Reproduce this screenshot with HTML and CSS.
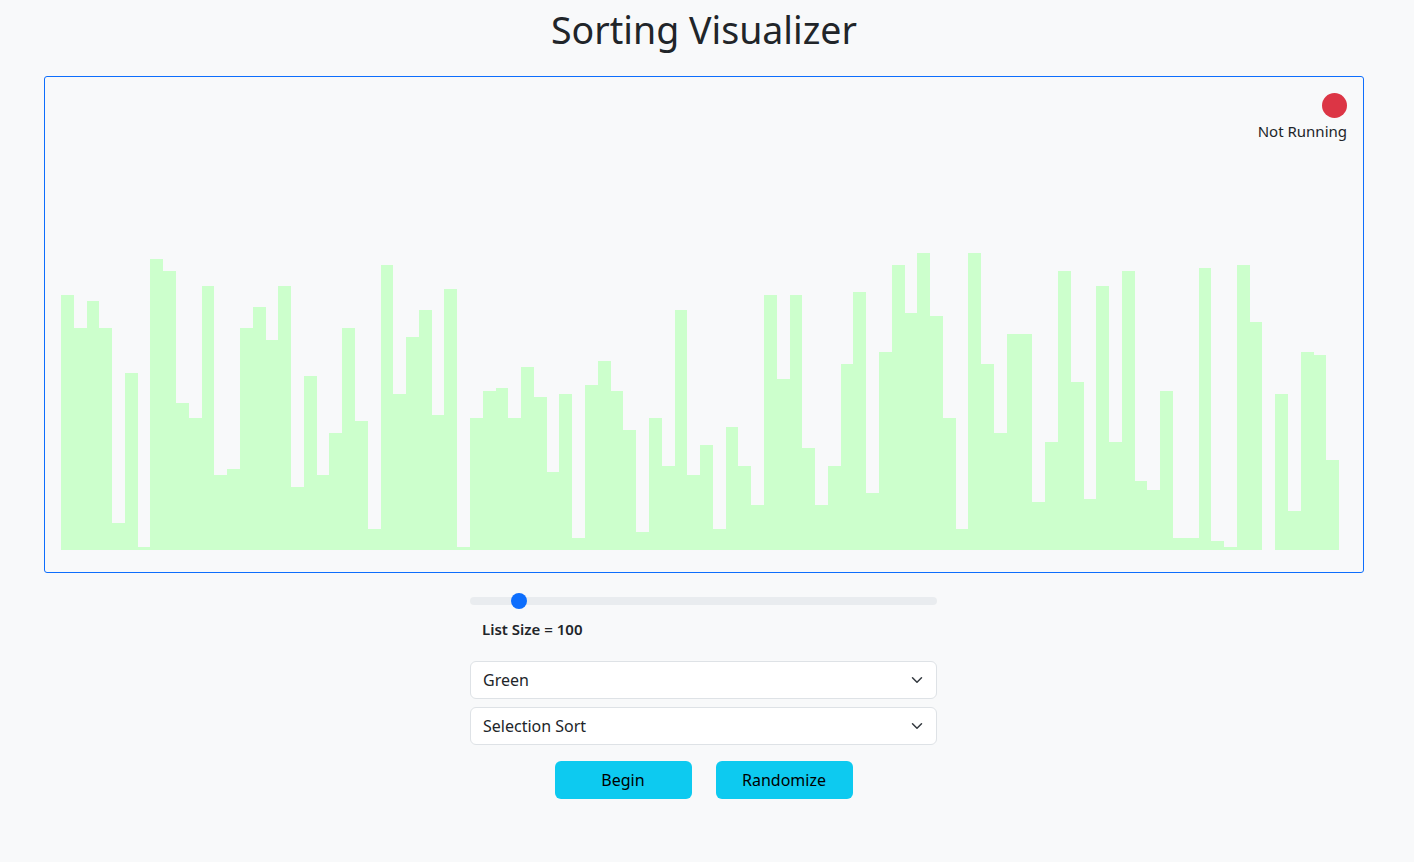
FILE: index.html
```html
<!DOCTYPE html>
<html lang="en">
<head>
<meta charset="utf-8">
<title>Sorting Visualizer</title>
<link rel="stylesheet" href="styles.css">
</head>
<body>
<div class="page">
  <h1 class="title">Sorting Visualizer</h1>
  <div class="board">
    <div class="status">
      <span class="status-dot"></span>
      <span class="status-text">Not Running</span>
    </div>
    <div class="bars-area">
      <div class="bars">
        <div class="bar" style="height:255px"></div>
        <div class="bar" style="height:222px"></div>
        <div class="bar" style="height:249px"></div>
        <div class="bar" style="height:222px"></div>
        <div class="bar" style="height:27px"></div>
        <div class="bar" style="height:177px"></div>
        <div class="bar" style="height:3px"></div>
        <div class="bar" style="height:291px"></div>
        <div class="bar" style="height:279px"></div>
        <div class="bar" style="height:147px"></div>
        <div class="bar" style="height:132px"></div>
        <div class="bar" style="height:264px"></div>
        <div class="bar" style="height:75px"></div>
        <div class="bar" style="height:81px"></div>
        <div class="bar" style="height:222px"></div>
        <div class="bar" style="height:243px"></div>
        <div class="bar" style="height:210px"></div>
        <div class="bar" style="height:264px"></div>
        <div class="bar" style="height:63px"></div>
        <div class="bar" style="height:174px"></div>
        <div class="bar" style="height:75px"></div>
        <div class="bar" style="height:117px"></div>
        <div class="bar" style="height:222px"></div>
        <div class="bar" style="height:129px"></div>
        <div class="bar" style="height:21px"></div>
        <div class="bar" style="height:285px"></div>
        <div class="bar" style="height:156px"></div>
        <div class="bar" style="height:213px"></div>
        <div class="bar" style="height:240px"></div>
        <div class="bar" style="height:135px"></div>
        <div class="bar" style="height:261px"></div>
        <div class="bar" style="height:3px"></div>
        <div class="bar" style="height:132px"></div>
        <div class="bar" style="height:159px"></div>
        <div class="bar" style="height:162px"></div>
        <div class="bar" style="height:132px"></div>
        <div class="bar" style="height:183px"></div>
        <div class="bar" style="height:153px"></div>
        <div class="bar" style="height:78px"></div>
        <div class="bar" style="height:156px"></div>
        <div class="bar" style="height:12px"></div>
        <div class="bar" style="height:165px"></div>
        <div class="bar" style="height:189px"></div>
        <div class="bar" style="height:159px"></div>
        <div class="bar" style="height:120px"></div>
        <div class="bar" style="height:18px"></div>
        <div class="bar" style="height:132px"></div>
        <div class="bar" style="height:84px"></div>
        <div class="bar" style="height:240px"></div>
        <div class="bar" style="height:75px"></div>
        <div class="bar" style="height:105px"></div>
        <div class="bar" style="height:21px"></div>
        <div class="bar" style="height:123px"></div>
        <div class="bar" style="height:84px"></div>
        <div class="bar" style="height:45px"></div>
        <div class="bar" style="height:255px"></div>
        <div class="bar" style="height:171px"></div>
        <div class="bar" style="height:255px"></div>
        <div class="bar" style="height:102px"></div>
        <div class="bar" style="height:45px"></div>
        <div class="bar" style="height:84px"></div>
        <div class="bar" style="height:186px"></div>
        <div class="bar" style="height:258px"></div>
        <div class="bar" style="height:57px"></div>
        <div class="bar" style="height:198px"></div>
        <div class="bar" style="height:285px"></div>
        <div class="bar" style="height:237px"></div>
        <div class="bar" style="height:297px"></div>
        <div class="bar" style="height:234px"></div>
        <div class="bar" style="height:132px"></div>
        <div class="bar" style="height:21px"></div>
        <div class="bar" style="height:297px"></div>
        <div class="bar" style="height:186px"></div>
        <div class="bar" style="height:117px"></div>
        <div class="bar" style="height:216px"></div>
        <div class="bar" style="height:216px"></div>
        <div class="bar" style="height:48px"></div>
        <div class="bar" style="height:108px"></div>
        <div class="bar" style="height:279px"></div>
        <div class="bar" style="height:168px"></div>
        <div class="bar" style="height:51px"></div>
        <div class="bar" style="height:264px"></div>
        <div class="bar" style="height:108px"></div>
        <div class="bar" style="height:279px"></div>
        <div class="bar" style="height:69px"></div>
        <div class="bar" style="height:60px"></div>
        <div class="bar" style="height:159px"></div>
        <div class="bar" style="height:12px"></div>
        <div class="bar" style="height:12px"></div>
        <div class="bar" style="height:282px"></div>
        <div class="bar" style="height:9px"></div>
        <div class="bar" style="height:3px"></div>
        <div class="bar" style="height:285px"></div>
        <div class="bar" style="height:228px"></div>
        <div class="bar" style="height:0px"></div>
        <div class="bar" style="height:156px"></div>
        <div class="bar" style="height:39px"></div>
        <div class="bar" style="height:198px"></div>
        <div class="bar" style="height:195px"></div>
        <div class="bar" style="height:90px"></div>
      </div>
    </div>
  </div>

  <div class="controls">
    <input class="range" type="range" min="10" max="1000" value="100">
    <div class="size-label">List Size = 100</div>

    <div class="select-wrap">
      <select class="select">
        <option>Green</option>
      </select>
      <svg class="chevron" viewBox="0 0 16 16" width="16" height="16"><path d="M2 5l6 6 6-6" fill="none" stroke="#343a40" stroke-width="2" stroke-linecap="round" stroke-linejoin="round"/></svg>
    </div>
    <div class="select-wrap">
      <select class="select">
        <option>Selection Sort</option>
      </select>
      <svg class="chevron" viewBox="0 0 16 16" width="16" height="16"><path d="M2 5l6 6 6-6" fill="none" stroke="#343a40" stroke-width="2" stroke-linecap="round" stroke-linejoin="round"/></svg>
    </div>

    <div class="buttons">
      <button class="btn" type="button">Begin</button>
      <button class="btn" type="button">Randomize</button>
    </div>
  </div>
</div>
</body>
</html>
```

FILE: styles.css
```css
* {
  box-sizing: border-box;
}

html, body {
  margin: 0;
  background: #f8f9fa;
}

body {
  padding: 0 6px 0 0;
  font-family: "Segoe UI", "Noto Sans", "Liberation Sans", sans-serif;
  font-size: 16px;
  color: #212529;
}

.page {
  width: 1320px;
  margin: 0 auto;
}

.title {
  margin: 0;
  padding-top: 4px;
  height: 76px;
  text-align: center;
  font-weight: 400;
  font-size: 37.5px;
  line-height: 52px;
  color: #212529;
}

.board {
  height: 497px;
  border: 1px solid #0d6efd;
  border-radius: 3px;
  display: flex;
  flex-direction: column;
  padding: 16px 16px 22px 16px;
}

.status {
  display: flex;
  flex-direction: column;
  align-items: flex-end;
}

.status-dot {
  width: 25px;
  height: 25px;
  border-radius: 50%;
  background: #dc3545;
}

.status-text {
  font-size: 15px;
  line-height: 26px;
  margin-right: 0;
}

.bars-area {
  flex: 1;
  display: flex;
  align-items: flex-end;
}

.bars {
  width: 1278px;
  height: 300px;
  display: flex;
  align-items: flex-end;
}

.bar {
  flex: 1 1 0;
  background: #ccffcc;
}

.controls {
  width: 467px;
  margin: 0 0 0 426px;
  padding-top: 20px;
  display: flex;
  flex-direction: column;
}

.range {
  -webkit-appearance: none;
  appearance: none;
  width: 100%;
  height: 16px;
  margin: 0;
  background: transparent;
}

.range::-webkit-slider-runnable-track {
  height: 8px;
  border-radius: 4px;
  background: #e9ecef;
}

.range::-webkit-slider-thumb {
  -webkit-appearance: none;
  appearance: none;
  width: 16px;
  height: 16px;
  margin-top: -4px;
  border-radius: 50%;
  background: #0d6efd;
  border: 0;
}

.size-label {
  padding: 0 0 0 12px;
  margin-top: 8px;
  font-weight: 600;
  font-size: 15px;
  line-height: 24px;
  margin-bottom: 20px;
}

.select-wrap {
  position: relative;
  margin-bottom: 8px;
}

.select {
  -webkit-appearance: none;
  appearance: none;
  display: block;
  width: 100%;
  height: 38px;
  padding: 0 36px 0 12px;
  font-family: inherit;
  font-size: 16px;
  color: #212529;
  background: #fff;
  border: 1px solid #dee2e6;
  border-radius: 6px;
}

.chevron {
  position: absolute;
  right: 14px;
  top: 13px;
  width: 12px;
  height: 12px;
  pointer-events: none;
}

.buttons {
  display: flex;
  justify-content: center;
  gap: 24px;
  margin-top: 8px;
}

.btn {
  width: 137px;
  height: 38px;
  border: 0;
  border-radius: 6px;
  background: #0dcaf0;
  color: #000;
  font-family: inherit;
  font-size: 16px;
}
```
